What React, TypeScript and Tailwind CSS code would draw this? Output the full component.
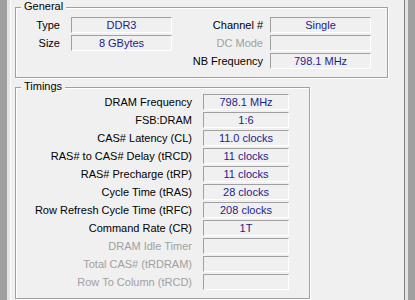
import type { ReactNode } from "react";

function GroupBox({ title, className, children }: { title: string; className: string; children: ReactNode }) {
  return (
    <div
      className={`relative border border-[#a0a0a0] shadow-[1px_1px_0_#ffffff,inset_1px_1px_0_#ffffff] ${className}`}
    >
      <span className="absolute left-[5px] top-[-8px] h-[13px] bg-[#f0f0f0] px-[3px] leading-[13px] text-black">
        {title}
      </span>
      {children}
    </div>
  );
}

function Field({ value, wide }: { value?: string; wide?: boolean }) {
  return (
    <div
      className={`${wide ? "w-[101px]" : "w-[86px]"} h-[16px] border border-t-[#a0a0a0] border-l-[#a0a0a0] border-b-white border-r-white text-center leading-[14px] text-[#1c1c8e]`}
    >
      {value}
    </div>
  );
}

const timings: { label: string; value?: string }[] = [
  { label: "DRAM Frequency", value: "798.1 MHz" },
  { label: "FSB:DRAM", value: "1:6" },
  { label: "CAS# Latency (CL)", value: "11.0 clocks" },
  { label: "RAS# to CAS# Delay (tRCD)", value: "11 clocks" },
  { label: "RAS# Precharge (tRP)", value: "11 clocks" },
  { label: "Cycle Time (tRAS)", value: "28 clocks" },
  { label: "Row Refresh Cycle Time (tRFC)", value: "208 clocks" },
  { label: "Command Rate (CR)", value: "1T" },
  { label: "DRAM Idle Timer" },
  { label: "Total CAS# (tRDRAM)" },
  { label: "Row To Column (tRCD)" },
];

export default function App() {
  return (
    <div className="flex h-[300px] w-[415px] overflow-hidden font-['Liberation_Sans',Arial,sans-serif] text-[11px]">
      <div className="w-[7px] bg-[#a0a0a0]" />
      <div className="w-[3px] bg-[#e3e3e3]" />
      <div className="w-[394px] border-l border-white bg-[#f0f0f0] pl-[4px]">
        <GroupBox title="General" className="mt-[7px] h-[71px] w-[373px]">
          <div className="flex flex-col gap-[2px] pt-[9px]">
            <div className="flex h-[16px] items-center">
              <span className="w-[44px] text-right text-black">Type</span>
              <div className="ml-[11px]">
                <Field wide value="DDR3" />
              </div>
              <span className="w-[91px] text-right text-black">Channel #</span>
              <div className="ml-[7px]">
                <Field wide value="Single" />
              </div>
            </div>
            <div className="flex h-[16px] items-center">
              <span className="w-[44px] text-right text-black">Size</span>
              <div className="ml-[11px]">
                <Field wide value="8 GBytes" />
              </div>
              <span className="w-[91px] text-right text-[#a0a0a0]">DC Mode</span>
              <div className="ml-[7px]">
                <Field wide />
              </div>
            </div>
            <div className="flex h-[16px] items-center">
              <span className="w-[44px]" />
              <div className="ml-[11px] w-[101px]" />
              <span className="w-[91px] text-right text-black">NB Frequency</span>
              <div className="ml-[7px]">
                <Field wide value="798.1 MHz" />
              </div>
            </div>
          </div>
        </GroupBox>

        <GroupBox title="Timings" className="mt-[9px] h-[212px] w-[295px]">
          <div className="flex flex-col gap-[2px] pt-[6px]">
            {timings.map((t) => (
              <div key={t.label} className="flex h-[16px] items-center">
                <span className={`w-[176px] text-right ${t.value ? "text-black" : "text-[#a0a0a0]"}`}>{t.label}</span>
                <div className="ml-[11px]">
                  <Field value={t.value} />
                </div>
              </div>
            ))}
          </div>
        </GroupBox>
      </div>
      <div className="w-[1px] bg-[#808080]" />
      <div className="w-[3px] bg-[#e3e3e3]" />
      <div className="flex-1 bg-[#a0a0a0]" />
    </div>
  );
}
